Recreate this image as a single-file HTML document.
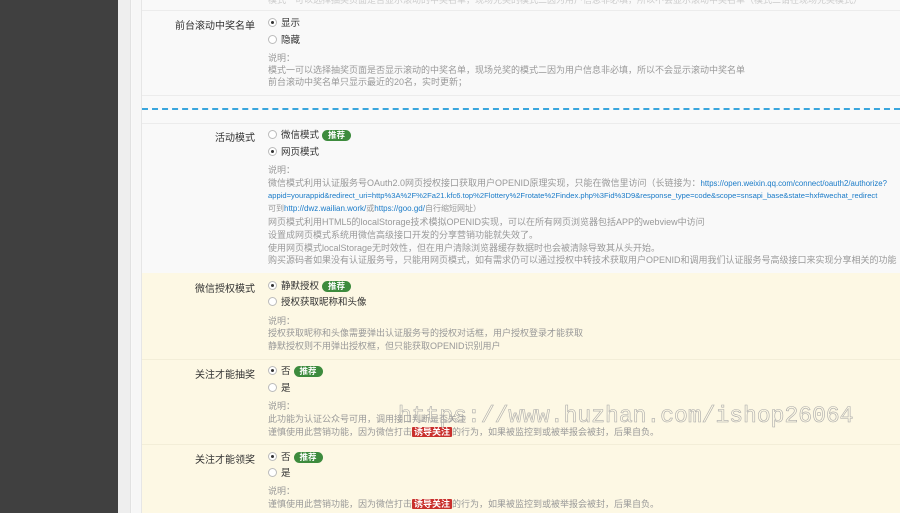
<!DOCTYPE html>
<html><head><meta charset="utf-8"><style>
*{margin:0;padding:0;box-sizing:border-box}
body{width:900px;height:513px;overflow:hidden;background:#f9f9f9;font-family:"Liberation Sans","Noto Sans CJK SC",sans-serif;position:relative}
.side{position:absolute;left:0;top:0;width:118px;height:513px;background:#404040}
.g1{position:absolute;left:118px;top:0;width:13px;height:513px;background:#eeeeee;border-right:1px solid #e2e2e2}
.g2{position:absolute;left:132px;top:0;width:10px;height:513px;background:#f7f7f7;border-right:1px solid #e6e6e6}
.t{position:absolute;white-space:nowrap;font-size:9px;line-height:12px;color:#999}
.lab{position:absolute;right:645px;white-space:nowrap;font-size:10px;color:#333;line-height:12px}
.opt{position:absolute;left:268px;white-space:nowrap;font-size:9.5px;color:#333;line-height:12px}
.opt i{display:inline-block;width:9px;height:9px;border:1px solid #bbb;border-radius:50%;background:#fff;vertical-align:-1px;margin-right:4px;position:relative}
.opt i.on:after{content:"";position:absolute;left:2px;top:2px;width:3px;height:3px;border-radius:50%;background:#333}
.b{display:inline-block;background:#3d8b3d;color:#fff;font-size:8.5px;font-weight:bold;line-height:11px;padding:0 6px;border-radius:6px;margin-left:3px;vertical-align:0}
.r{background:#c9302c;color:#fff;padding:0 2px;border-radius:1px;font-weight:bold}
.a{color:#1a7bc8}
.hl{position:absolute;left:142px;right:0;height:1px;background:#ececec}
.yel{position:absolute;left:142px;right:0;top:273px;bottom:0;background:#fdf8e4}
.wm{position:absolute;left:398px;top:403px;font-family:"Liberation Mono",monospace;font-size:23px;color:transparent;-webkit-text-stroke:0.6px #aaa;white-space:nowrap}
</style></head><body>
<div class="side"></div><div class="g1"></div><div class="g2"></div>
<div class="yel"></div>
<div class="t" style="left:268px;top:-6px;color:#ccc">模式一可以选择抽奖页面是否显示滚动的中奖名单，现场兑奖的模式二因为用户信息非必填，所以不会显示滚动中奖名单（模式二请在现场兑奖模式）</div>
<div class="hl" style="top:10px"></div>
<div class="lab" style="top:21px">前台滚动中奖名单</div>
<div class="opt" style="top:18px"><i class="on"></i>显示</div>
<div class="opt" style="top:35px"><i></i>隐藏</div>
<div class="t" style="left:268px;top:52px">说明：</div>
<div class="t" style="left:268px;top:64px">模式一可以选择抽奖页面是否显示滚动的中奖名单，现场兑奖的模式二因为用户信息非必填，所以不会显示滚动中奖名单</div>
<div class="t" style="left:268px;top:76px">前台滚动中奖名单只显示最近的20名，实时更新；</div>
<div class="hl" style="top:95px"></div>
<div style="position:absolute;left:142px;right:0;top:108px;border-top:2px dashed #3aa6dd"></div>
<div class="hl" style="top:123px"></div>
<div class="lab" style="top:133px">活动模式</div>
<div class="opt" style="top:130px"><i></i>微信模式<span class="b">推荐</span></div>
<div class="opt" style="top:147px"><i class="on"></i>网页模式</div>
<div class="t" style="left:268px;top:164px">说明：</div>
<div class="t" style="left:268px;top:177px">微信模式利用认证服务号OAuth2.0网页授权接口获取用户OPENID原理实现，只能在微信里访问（长链接为：<span class="a" style="font-size:7.8px">https://open.weixin.qq.com/connect/oauth2/authorize?</span></div>
<div class="t a" style="left:268px;top:190px;font-size:7.6px">appid=yourappid&amp;redirect_uri=http%3A%2F%2Fa21.kfc6.top%2Flottery%2Frotate%2Findex.php%3Fid%3D9&amp;response_type=code&amp;scope=snsapi_base&amp;state=hxf#wechat_redirect</div>
<div class="t" style="left:268px;top:203px;font-size:8px">可到<span class="a">http://dwz.wailian.work/</span>或<span class="a">https://goo.gd/</span>自行缩短网址）</div>
<div class="t" style="left:268px;top:216px">网页模式利用HTML5的localStorage技术模拟OPENID实现，可以在所有网页浏览器包括APP的webview中访问</div>
<div class="t" style="left:268px;top:229px">设置成网页模式系统用微信高级接口开发的分享营销功能就失效了。</div>
<div class="t" style="left:268px;top:242px">使用网页模式localStorage无时效性，但在用户清除浏览器缓存数据时也会被清除导致其从头开始。</div>
<div class="t" style="left:268px;top:254px">购买源码者如果没有认证服务号，只能用网页模式，如有需求仍可以通过授权中转技术获取用户OPENID和调用我们认证服务号高级接口来实现分享相关的功能（另购）</div>
<div class="lab" style="top:284px">微信授权模式</div>
<div class="opt" style="top:281px"><i class="on"></i>静默授权<span class="b">推荐</span></div>
<div class="opt" style="top:297px"><i></i>授权获取昵称和头像</div>
<div class="t" style="left:268px;top:315px">说明：</div>
<div class="t" style="left:268px;top:327px">授权获取昵称和头像需要弹出认证服务号的授权对话框，用户授权登录才能获取</div>
<div class="t" style="left:268px;top:340px">静默授权则不用弹出授权框，但只能获取OPENID识别用户</div>
<div class="hl" style="top:359px;background:#f3eed8"></div>
<div class="lab" style="top:370px">关注才能抽奖</div>
<div class="opt" style="top:366px"><i class="on"></i>否<span class="b">推荐</span></div>
<div class="opt" style="top:383px"><i></i>是</div>
<div class="t" style="left:268px;top:400px">说明：</div>
<div class="t" style="left:268px;top:413px">此功能为认证公众号可用，调用接口判断是否关注</div>
<div class="t" style="left:268px;top:426px">谨慎使用此营销功能，因为微信打击<span class="r">诱导关注</span>的行为，如果被监控到或被举报会被封，后果自负。</div>
<div class="hl" style="top:444px;background:#f3eed8"></div>
<div class="lab" style="top:455px">关注才能领奖</div>
<div class="opt" style="top:452px"><i class="on"></i>否<span class="b">推荐</span></div>
<div class="opt" style="top:468px"><i></i>是</div>
<div class="t" style="left:268px;top:485px">说明：</div>
<div class="t" style="left:268px;top:498px">谨慎使用此营销功能，因为微信打击<span class="r">诱导关注</span>的行为，如果被监控到或被举报会被封，后果自负。</div>
<div class="wm">https://www.huzhan.com/ishop26064</div>
</body></html>
